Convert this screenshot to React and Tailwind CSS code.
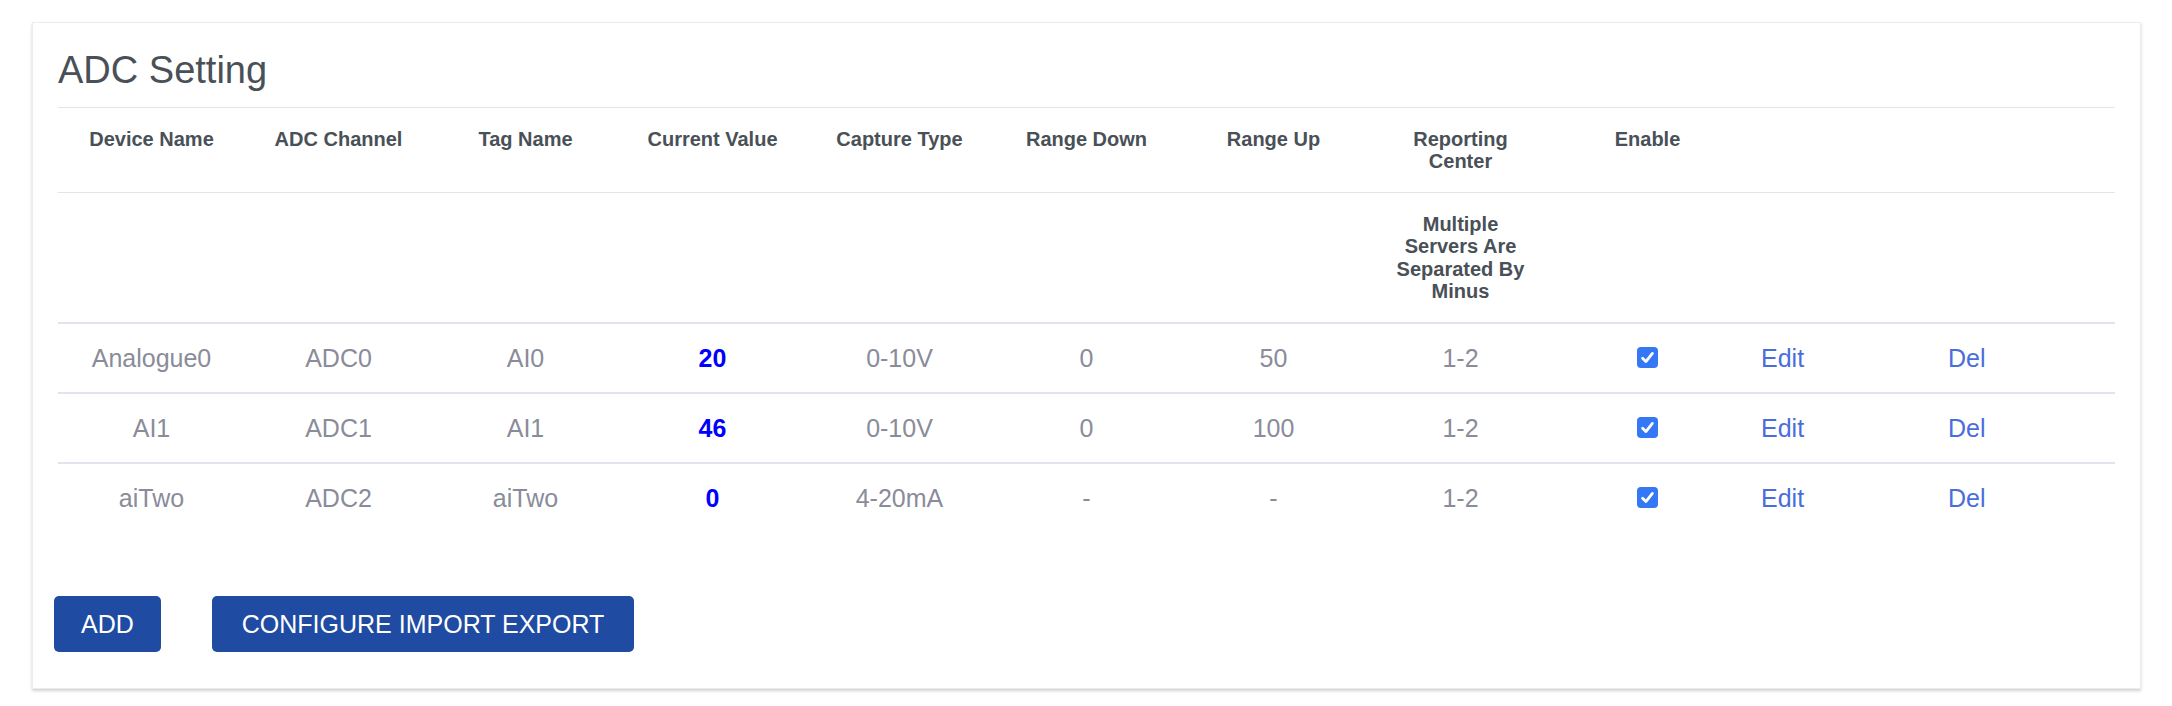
import React from "react";

const rows = [
    { device: "Analogue0", channel: "ADC0", tag: "AI0", value: "20", type: "0-10V", down: "0", up: "50", center: "1-2" },
    { device: "AI1", channel: "ADC1", tag: "AI1", value: "46", type: "0-10V", down: "0", up: "100", center: "1-2" },
    { device: "aiTwo", channel: "ADC2", tag: "aiTwo", value: "0", type: "4-20mA", down: "-", up: "-", center: "1-2" },
];

const headers = [
    "Device Name",
    "ADC Channel",
    "Tag Name",
    "Current Value",
    "Capture Type",
    "Range Down",
    "Range Up",
    "Reporting Center",
    "Enable",
    "",
    "",
];

function CheckedBox() {
    return (
        <svg width="21" height="21" viewBox="0 0 21 21" className="inline-block align-[-1px]">
            <rect x="0" y="0" width="21" height="21" rx="4" fill="#3478f6" />
            <path
                d="M5.6 11.2 L8.9 14.6 L15.4 6.4"
                fill="none"
                stroke="#ffffff"
                strokeWidth="2.8"
                strokeLinecap="round"
                strokeLinejoin="round"
            />
        </svg>
    );
}

export default function App() {
    const th = "px-[20px] py-[19.5px] text-center align-top font-bold text-[20px] leading-[22.5px] text-[#495057]";
    const td = "px-[20px] py-[19.5px] text-center align-middle text-[25px] leading-[29px] text-[#8a8c9a] border-t-2 border-[#e2e4ec]";

    return (
        <div className="w-full min-h-screen bg-white pt-[22px] pl-[32px] pr-[31px] font-['Liberation_Sans',Arial,sans-serif]">
            <div className="bg-white border border-[#ececec] shadow-[0_2px_3px_rgba(0,0,0,0.18)] px-[25px] pt-[24px] pb-[36px]">
                <h2 className="text-[38px] leading-[46px] text-[#495057] mb-[14px]">ADC Setting</h2>

                <table className="w-full table-fixed border-collapse">
                    <thead>
                        <tr className="border-t border-[#e2e4ec]">
                            {headers.map((h, i) => (
                                <th key={i} className={th}>
                                    {h}
                                </th>
                            ))}
                        </tr>
                        <tr className="border-t border-[#e2e4ec]">
                            {headers.map((h, i) => (
                                <th key={i} className={th}>
                                    {i === 7 ? "Multiple Servers Are Separated By Minus" : ""}
                                </th>
                            ))}
                        </tr>
                    </thead>
                    <tbody>
                        {rows.map((r, i) => (
                            <tr key={i}>
                                <td className={td}>{r.device}</td>
                                <td className={td}>{r.channel}</td>
                                <td className={td}>{r.tag}</td>
                                <td className={td}>
                                    <span className="font-bold text-[#0000ff]">{r.value}</span>
                                </td>
                                <td className={td}>{r.type}</td>
                                <td className={td}>{r.down}</td>
                                <td className={td}>{r.up}</td>
                                <td className={td}>{r.center}</td>
                                <td className={td}>
                                    <CheckedBox />
                                </td>
                                <td className={td + " !text-left"}>
                                    <a className="text-[#4a6ddc] cursor-pointer">Edit</a>
                                </td>
                                <td className={td + " !text-left"}>
                                    <a className="text-[#4a6ddc] cursor-pointer">Del</a>
                                </td>
                            </tr>
                        ))}
                    </tbody>
                </table>

                <div className="flex gap-[51px] mt-[64px] -ml-[4px]">
                    <button className="bg-[#1f4ba3] text-white text-[25px] leading-[28px] px-[27px] py-[14px] rounded-[5px]">
                        ADD
                    </button>
                    <button className="bg-[#1f4ba3] text-white text-[25px] leading-[28px] px-[30px] py-[14px] rounded-[5px]">
                        CONFIGURE IMPORT EXPORT
                    </button>
                </div>
            </div>
        </div>
    );
}
